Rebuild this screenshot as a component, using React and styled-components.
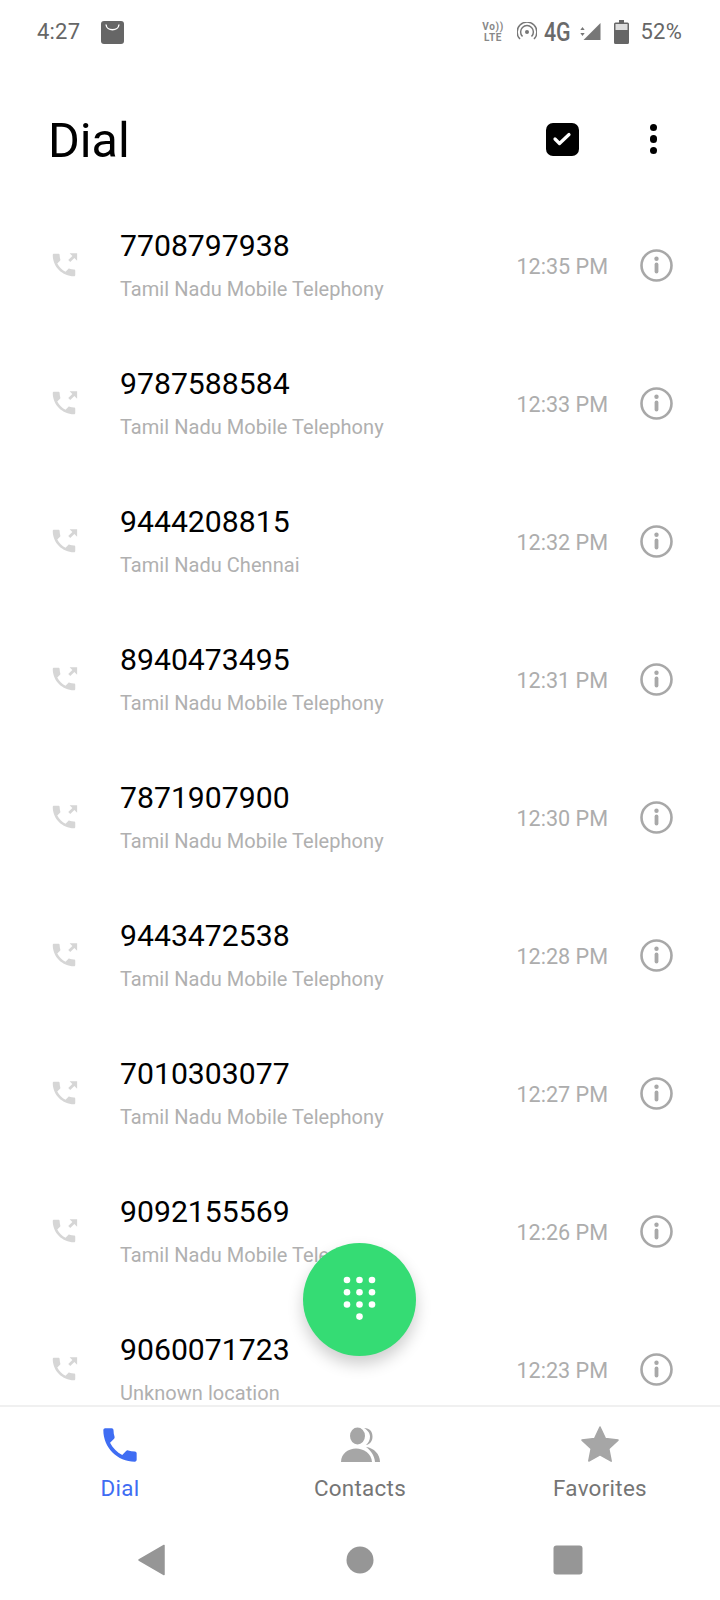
import styled, { createGlobalStyle } from 'styled-components';

const GlobalStyle = createGlobalStyle`
  html, body {
    margin: 0;
    padding: 0;
    background: #fff;
  }
  body {
    font-family: Roboto, 'Liberation Sans', sans-serif;
  }
`;

const Screen = styled.div`
  position: relative;
  width: 720px;
  height: 1600px;
  display: flex;
  flex-direction: column;
  overflow: hidden;
  background: #fff;
`;

const StatusBar = styled.div`
  height: 64px;
  flex-shrink: 0;
  display: flex;
  align-items: center;
  box-sizing: border-box;
  padding: 0 38px 0 37px;
  color: #666;
`;

const StatusText = styled.span`
  font-size: 22px;
  line-height: 26px;
  letter-spacing: 0.2px;
`;

const StatusLeft = styled.div`
  display: flex;
  align-items: center;
  gap: 21px;
`;

const StatusRight = styled.div`
  margin-left: auto;
  display: flex;
  align-items: center;
`;

const Volte = styled.div`
  display: flex;
  flex-direction: column;
  align-items: center;
  width: 21px;
  font-size: 10px;
  line-height: 11px;
  font-weight: 700;
  letter-spacing: 0.7px;
  color: #888;
  margin-right: 13px;
`;

const NetworkType = styled.span`
  font-size: 26px;
  line-height: 26px;
  font-weight: 500;
  color: #6a6a6a;
  transform: scaleX(0.82);
  transform-origin: left center;
  width: 29px;
  margin: 0 7px 0 7px;
`;

const BatteryWrap = styled.svg`
  margin-left: 12px;
`;

const BatteryLabel = styled(StatusText)`
  margin-left: 12px;
`;

const Header = styled.div`
  height: 132px;
  flex-shrink: 0;
  box-sizing: border-box;
  padding: 20px 50px 0 48px;
  display: flex;
  align-items: center;
`;

const Title = styled.h1`
  margin: 1px auto 0 0;
  font-size: 48.5px;
  line-height: 56px;
  font-weight: 400;
  color: #000;
`;

const SelectBox = styled.div`
  width: 33px;
  height: 33px;
  border-radius: 7px;
  background: #000;
  display: flex;
  align-items: center;
  justify-content: center;
  margin-right: 71px;
  margin-top: -2px;
`;

const MenuDots = styled.div`
  display: flex;
  flex-direction: column;
  gap: 4px;
  margin-right: 13px;
  margin-top: -2px;
`;

const MenuDot = styled.span`
  width: 7.5px;
  height: 7.5px;
  border-radius: 50%;
  background: #000;
`;

const CallList = styled.div`
  flex: 1;
  min-height: 0;
  overflow: hidden;
`;

const CallRow = styled.div`
  height: 138px;
  display: flex;
  align-items: center;
  padding: 0 47px 0 49px;
`;

const CallIcon = styled.svg`
  width: 30px;
  height: 30px;
  fill: #d6d6d6;
  flex-shrink: 0;
  margin-right: 41px;
`;

const CallText = styled.div`
  flex: 1;
  min-width: 0;
  margin-top: -1px;
`;

const PhoneNumber = styled.div`
  font-size: 30.2px;
  line-height: 36px;
  color: #000;
`;

const Location = styled.div`
  font-size: 20px;
  line-height: 24px;
  letter-spacing: 0.04px;
  color: #b0b0b0;
  margin-top: 13px;
`;

const CallTime = styled.div`
  font-size: 21.6px;
  line-height: 26px;
  color: #adadad;
  margin-right: 32px;
  margin-top: 3px;
`;

const InfoIcon = styled.svg`
  width: 33px;
  height: 33px;
  flex-shrink: 0;
`;

const Fab = styled.div`
  position: absolute;
  left: 303px;
  top: 1243px;
  width: 113px;
  height: 113px;
  border-radius: 50%;
  background: #35dc74;
  box-shadow: 0 8px 16px rgba(0, 0, 0, 0.2);
  display: flex;
  align-items: center;
  justify-content: center;
`;

const BottomNav = styled.div`
  flex-shrink: 0;
  height: 115px;
  box-sizing: border-box;
  border-top: 2px solid #f0f0f0;
  display: grid;
  grid-template-columns: repeat(3, 240px);
`;

const Tab = styled.div`
  display: flex;
  flex-direction: column;
  align-items: center;
  padding-top: 18px;
  color: ${(p) => (p.$active ? '#3f6df3' : '#757575')};
`;

const TabIcon = styled.svg`
  width: 40px;
  height: 40px;
  fill: ${(p) => (p.$active ? '#3f6df3' : '#a6a6a6')};
`;

const TabLabel = styled.div`
  font-size: 22.4px;
  line-height: 26px;
  margin-top: 10px;
  letter-spacing: 0.3px;
`;

const SystemNav = styled.div`
  flex-shrink: 0;
  height: 80px;
  display: grid;
  grid-template-columns: repeat(3, 208px);
  justify-content: center;
  align-items: center;
  justify-items: center;
`;

const SystemIcon = styled.svg`
  width: 32px;
  height: 32px;
  fill: #969696;
`;

const CALLS = [
  { number: '7708797938', location: 'Tamil Nadu Mobile Telephony', time: '12:35 PM' },
  { number: '9787588584', location: 'Tamil Nadu Mobile Telephony', time: '12:33 PM' },
  { number: '9444208815', location: 'Tamil Nadu Chennai', time: '12:32 PM' },
  { number: '8940473495', location: 'Tamil Nadu Mobile Telephony', time: '12:31 PM' },
  { number: '7871907900', location: 'Tamil Nadu Mobile Telephony', time: '12:30 PM' },
  { number: '9443472538', location: 'Tamil Nadu Mobile Telephony', time: '12:28 PM' },
  { number: '7010303077', location: 'Tamil Nadu Mobile Telephony', time: '12:27 PM' },
  { number: '9092155569', location: 'Tamil Nadu Mobile Telephony', time: '12:26 PM' },
  { number: '9060071723', location: 'Unknown location', time: '12:23 PM' },
];

const PHONE_PATH =
  'M20 15.5c-1.25 0-2.45-.2-3.57-.57-.35-.11-.74-.03-1.02.24l-2.2 2.2c-2.83-1.44-5.15-3.75-6.59-6.59l2.2-2.21c.28-.26.36-.65.25-1C8.7 6.45 8.5 5.25 8.5 4c0-.55-.45-1-1-1H4c-.55 0-1 .45-1 1 0 9.39 7.61 17 17 17 .55 0 1-.45 1-1v-3.5c0-.55-.45-1-1-1z';

const Dialpad = () => {
  const xs = [11, 23.5, 36];
  const ys = [10, 22.3, 34.5];
  return (
    <svg width="47" height="60" viewBox="0 0 47 60" fill="#fff">
      {ys.map((y) => xs.map((x) => <circle key={`${x}-${y}`} cx={x} cy={y} r="3.3" />))}
      <circle cx="23.5" cy="46.6" r="3.3" />
    </svg>
  );
};

const App = () => {
  return (
    <Screen>
      <GlobalStyle />
      <StatusBar>
        <StatusLeft>
          <StatusText>4:27</StatusText>
          <svg width="23" height="23" viewBox="0 0 23 23">
            <rect width="23" height="23" rx="3" fill="#666" />
            <path d="M5 3.500c.6 7 12.400 7 13 0" fill="none" stroke="#fff" strokeWidth="1.400" />
          </svg>
        </StatusLeft>
        <StatusRight>
          <Volte>
            <span>Vo))</span>
            <span>LTE</span>
          </Volte>
          <svg width="20" height="20" viewBox="0 0 20 20" fill="none" stroke="#777" strokeWidth="1.500">
            <circle cx="10" cy="10" r="2" fill="#777" stroke="none" />
            <path d="M5.500 14.500a6.400 6.400 0 1 1 9 0" />
            <path d="M3 17a9.900 9.900 0 1 1 14 0" />
          </svg>
          <NetworkType>4G</NetworkType>
          <svg width="22" height="20" viewBox="0 0 22 20" fill="#777">
            <path d="M2.500 5l2.200 3H.3zM2.500 14l-2.200-3h4.400zM20.500 1v17H3.500z" />
          </svg>
          <BatteryWrap width="15" height="24" viewBox="0 0 15 24">
            <path d="M5 0h5v2.500h3.500a1.500 1.500 0 0 1 1.500 1.500v18.500a1.500 1.500 0 0 1-1.500 1.500h-12A1.500 1.500 0 0 1 0 22.500V4a1.500 1.500 0 0 1 1.500-1.500H5z" fill="#666" />
            <rect x="1.500" y="4" width="12" height="6" fill="#ddd" />
          </BatteryWrap>
          <BatteryLabel>52%</BatteryLabel>
        </StatusRight>
      </StatusBar>

      <Header>
        <Title>Dial</Title>
        <SelectBox>
          <svg width="20" height="16" viewBox="0 0 20 16" fill="none" stroke="#fff" strokeWidth="3.200" strokeLinecap="round" strokeLinejoin="round">
            <path d="M3 8l4.500 4.500L17 3.500" />
          </svg>
        </SelectBox>
        <MenuDots>
          <MenuDot />
          <MenuDot />
          <MenuDot />
        </MenuDots>
      </Header>

      <CallList>
        {CALLS.map((call) => (
          <CallRow key={call.number}>
            <CallIcon viewBox="0 0 24 24">
              <path d={PHONE_PATH} />
              <path d="M16.500 2.500h6v6l-2.200-2.200-3.300 3.300-1.600-1.600 3.300-3.300z" />
            </CallIcon>
            <CallText>
              <PhoneNumber>{call.number}</PhoneNumber>
              <Location>{call.location}</Location>
            </CallText>
            <CallTime>{call.time}</CallTime>
            <InfoIcon viewBox="0 0 33 33">
              <circle cx="16.500" cy="16.500" r="15" fill="none" stroke="#a8a8a8" strokeWidth="2.600" />
              <circle cx="16.500" cy="9.800" r="2.200" fill="#a8a8a8" />
              <rect x="14.600" y="13.500" width="3.800" height="11" rx="1.900" fill="#a8a8a8" />
            </InfoIcon>
          </CallRow>
        ))}
      </CallList>

      <BottomNav>
        <Tab $active>
          <TabIcon $active viewBox="1.200 1.200 21.600 21.600">
            <path d={PHONE_PATH} />
          </TabIcon>
          <TabLabel>Dial</TabLabel>
        </Tab>
        <Tab>
          <TabIcon viewBox="0 0 40 40">
            <ellipse cx="17.500" cy="11" rx="7.500" ry="8.500" />
            <path d="M24 3c6 0 8.500 4 8.500 8.500S30 19.500 26 20c2.500-2 4-5 4-8.500S27.500 5 24 3z" />
            <path d="M1 37c0-8.500 7.500-13.500 15-13.500S31.500 28.500 32 37z" />
            <path d="M26 22c8 1 14 7 14 15h-5c-.5-6-3.500-11-9-15z" />
          </TabIcon>
          <TabLabel>Contacts</TabLabel>
        </Tab>
        <Tab>
          <TabIcon viewBox="0 0 40 40">
            <path d="M20 2l5.400 11.500 12.600 1.600-9.200 8.700 2.400 12.400L20 29.800 8.800 36l2.400-12.400L2 15.100l12.600-1.600z" stroke="#a6a6a6" strokeWidth="1.500" strokeLinejoin="round" />
          </TabIcon>
          <TabLabel>Favorites</TabLabel>
        </Tab>
      </BottomNav>

      <SystemNav>
        <SystemIcon viewBox="0 0 32 32">
          <path d="M3 16L28 1.500v29z" stroke="#969696" strokeWidth="1.500" strokeLinejoin="round" />
        </SystemIcon>
        <SystemIcon viewBox="0 0 32 32">
          <circle cx="16" cy="16" r="13.500" />
        </SystemIcon>
        <SystemIcon viewBox="0 0 32 32">
          <rect x="1.500" y="1.500" width="29" height="29" rx="3" />
        </SystemIcon>
      </SystemNav>

      <Fab>
        <Dialpad />
      </Fab>
    </Screen>
  );
};

export default App;
